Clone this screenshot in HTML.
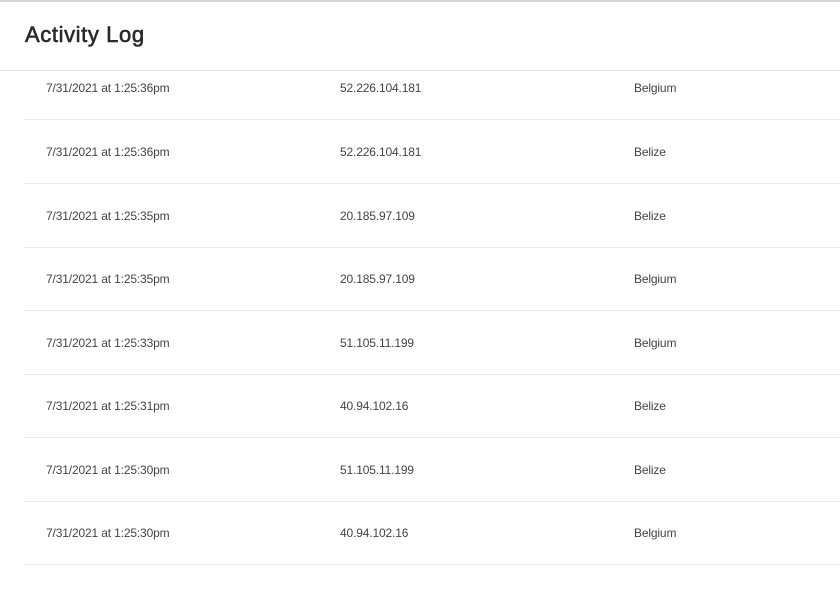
<!DOCTYPE html>
<html><head><style>
body{margin:0;width:840px;height:597px;background:#fff;font-family:"Liberation Sans",sans-serif;position:relative;overflow:hidden}
.top{position:absolute;left:0;top:0;width:840px;height:2px;background:#d6d6d6}
h1{position:absolute;left:25px;top:22px;margin:0;font-size:22px;font-weight:normal;color:#2a2a2a;letter-spacing:0.6px;-webkit-text-stroke:0.6px #2a2a2a}
.hl{position:absolute;left:0;top:70px;width:840px;height:1px;background:#e4e4e4}
.row{position:absolute;left:24px;width:816px;height:63px;border-bottom:1px solid #ececec;font-size:12px;color:#444;letter-spacing:-0.15px}
.row span{position:absolute;top:0}
</style></head><body>
<div class="top"></div>
<h1>Activity Log</h1>
<div class="hl"></div>
<div class="row" style="top:56px"><span style="left:22px;top:25px">7/31/2021 at 1:25:36pm</span><span style="left:316px;top:25px">52.226.104.181</span><span style="left:610px;top:25px">Belgium</span></div>
<div class="row" style="top:120px"><span style="left:22px;top:25px">7/31/2021 at 1:25:36pm</span><span style="left:316px;top:25px">52.226.104.181</span><span style="left:610px;top:25px">Belize</span></div>
<div class="row" style="top:183.5px"><span style="left:22px;top:25px">7/31/2021 at 1:25:35pm</span><span style="left:316px;top:25px">20.185.97.109</span><span style="left:610px;top:25px">Belize</span></div>
<div class="row" style="top:247px"><span style="left:22px;top:25px">7/31/2021 at 1:25:35pm</span><span style="left:316px;top:25px">20.185.97.109</span><span style="left:610px;top:25px">Belgium</span></div>
<div class="row" style="top:310.5px"><span style="left:22px;top:25px">7/31/2021 at 1:25:33pm</span><span style="left:316px;top:25px">51.105.11.199</span><span style="left:610px;top:25px">Belgium</span></div>
<div class="row" style="top:374px"><span style="left:22px;top:25px">7/31/2021 at 1:25:31pm</span><span style="left:316px;top:25px">40.94.102.16</span><span style="left:610px;top:25px">Belize</span></div>
<div class="row" style="top:437.5px"><span style="left:22px;top:25px">7/31/2021 at 1:25:30pm</span><span style="left:316px;top:25px">51.105.11.199</span><span style="left:610px;top:25px">Belize</span></div>
<div class="row" style="top:501px"><span style="left:22px;top:25px">7/31/2021 at 1:25:30pm</span><span style="left:316px;top:25px">40.94.102.16</span><span style="left:610px;top:25px">Belgium</span></div>
</body></html>
